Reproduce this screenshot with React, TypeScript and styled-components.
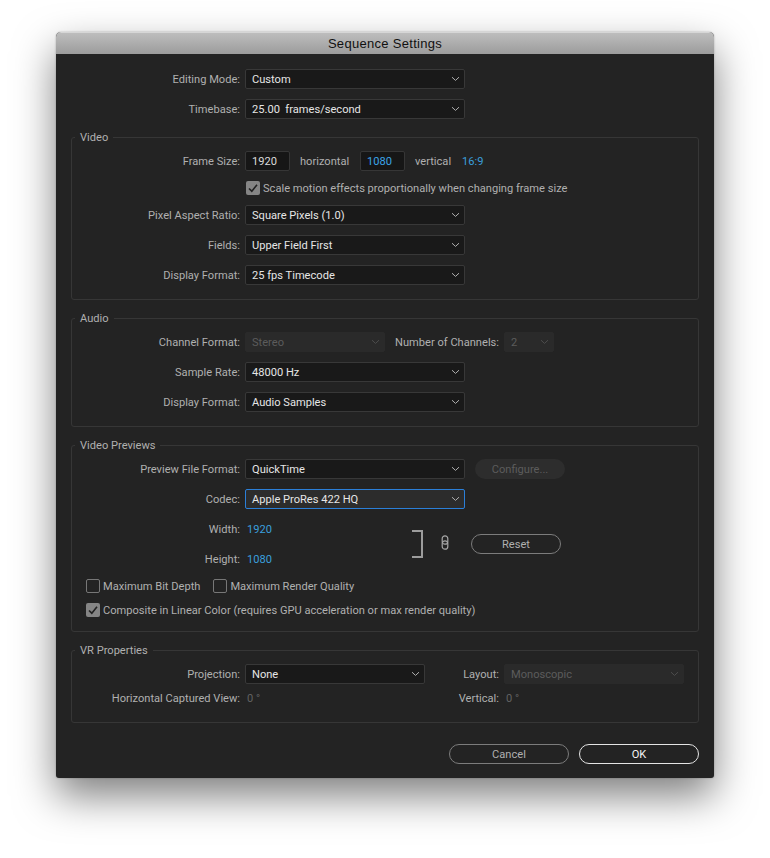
import React from "react";
import styled, { createGlobalStyle, css } from "styled-components";

const Global = createGlobalStyle`
  html, body { margin: 0; padding: 0; background: #fff; }
  body { font-family: Roboto, Lato, sans-serif; font-size: 11.1px; line-height: 19px; }
  * { box-sizing: border-box; }
`;

const textLine = css`
  line-height: 19px;
  padding-top: 1px;
`;

const Page = styled.div`
  width: 770px;
  height: 858px;
  padding: 32px 0 0 56px;
  overflow: hidden;
`;

const Window = styled.div`
  width: 658px;
  height: 746px;
  background: #232323;
  border-radius: 5px 5px 3px 3px;
  box-shadow: 0 18px 40px rgba(0, 0, 0, 0.5), 0 0 2px rgba(0, 0, 0, 0.3);
  overflow: hidden;
`;

const TitleBar = styled.div`
  height: 22px;
  display: flex;
  align-items: center;
  justify-content: center;
  background: linear-gradient(#bdbdbd, #9c9c9c);
  border-top: 1px solid #d6d6d6;
  color: #111;
  font-family: "Liberation Sans", Arial, sans-serif;
  font-size: 13px;
  letter-spacing: 0.3px;
`;

const Content = styled.div`
  padding: 15px;
  display: flex;
  flex-direction: column;
  align-items: stretch;
`;

const Stack = styled.div<{ $gap?: number }>`
  display: flex;
  flex-direction: column;
  gap: ${(p) => p.$gap ?? 10}px;
`;

const Group = styled.fieldset`
  margin: 11px 0 0;
  min-width: 0;
  padding: 7px 0 14px;
  border: 1px solid #363636;
  border-radius: 3px;
`;

const Legend = styled.legend`
  margin-left: 3px;
  padding: 0 5px;
  height: 14px;
  line-height: 16px;
  color: #b0b0b0;
`;

const Row = styled.div`
  display: flex;
  align-items: center;
  gap: 5px;
  height: 20px;
`;

const Label = styled.div<{ $w: number }>`
  ${textLine}
  width: ${(p) => p.$w}px;
  flex: none;
  text-align: right;
  color: #b0b0b0;
  white-space: nowrap;
`;

const SelectBox = styled.div<{ $w: number; $off?: boolean; $focus?: boolean }>`
  width: ${(p) => p.$w}px;
  height: 20px;
  flex: none;
  display: flex;
  align-items: center;
  justify-content: space-between;
  padding: 0 4px 0 6px;
  border-radius: 2px;
  border: 1px solid ${(p) => (p.$focus ? "#2b7fd8" : p.$off ? "#2a2a2a" : "#383838")};
  background: ${(p) => (p.$off ? "#2a2a2a" : p.$focus ? "#2c2c2c" : "#191919")};
  color: ${(p) => (p.$off ? "#5c5c5c" : "#e6e6e6")};
  white-space: pre;
`;

const Value = styled.span`
  ${textLine}
`;

const Chevron = styled.svg<{ $off?: boolean }>`
  width: 9px;
  height: 6px;
  flex: none;
  fill: none;
  stroke: ${(p) => (p.$off ? "#4c4c4c" : "#b0b0b0")};
  stroke-width: 1;
`;

const Select = ({ w, value, off, focus }: { w: number; value: string; off?: boolean; focus?: boolean }) => (
  <SelectBox $w={w} $off={off} $focus={focus}>
    <Value>{value}</Value>
    <Chevron $off={off} viewBox="0 0 9 6">
      <polyline points="1,1.2 4.5,4.4 8,1.2" />
    </Chevron>
  </SelectBox>
);

const NumberField = styled.div<{ $blue?: boolean }>`
  width: 45px;
  height: 20px;
  flex: none;
  display: flex;
  align-items: center;
  padding-left: 6px;
  border: 1px solid #363636;
  border-radius: 2px;
  background: #161616;
  color: ${(p) => (p.$blue ? "#3ba4e6" : "#dcdcdc")};
`;

const Unit = styled.div<{ $w: number }>`
  ${textLine}
  width: ${(p) => p.$w}px;
  margin-left: 5px;
  flex: none;
  color: #b0b0b0;
`;

const BlueValue = styled.div`
  ${textLine}
  color: #3a9fdc;
`;

const ValueCell = styled.div<{ $w?: number; $dim?: boolean }>`
  ${textLine}
  width: ${(p) => p.$w ?? 180}px;
  flex: none;
  padding-left: 2px;
  color: ${(p) => (p.$dim ? "#626262" : "#3a9fdc")};
`;

const CheckRow = styled.div<{ $pad: number }>`
  display: flex;
  align-items: center;
  height: 14px;
  padding-left: ${(p) => p.$pad}px;
  gap: 13px;
`;

const CheckLabel = styled.div`
  display: flex;
  align-items: center;
  gap: 3px;
  color: #b0b0b0;
  white-space: nowrap;
`;

const Box = styled.div<{ $on?: boolean }>`
  width: 14px;
  height: 14px;
  flex: none;
  display: flex;
  align-items: center;
  justify-content: center;
  border-radius: 2px;
  border: ${(p) => (p.$on ? "none" : "1.5px solid #777")};
  background: ${(p) => (p.$on ? "#858585" : "transparent")};
`;

const Tick = styled.svg`
  width: 10px;
  height: 10px;
  fill: none;
  stroke: #222;
  stroke-width: 1.6;
`;

const Check = ({ on, children }: { on?: boolean; children: React.ReactNode }) => (
  <CheckLabel>
    <Box $on={on}>
      {on && (
        <Tick viewBox="0 0 10 10">
          <polyline points="1,5.5 3.8,8.2 9,1.8" />
        </Tick>
      )}
    </Box>
    <Value>{children}</Value>
  </CheckLabel>
);

const Dimensions = styled.div`
  display: flex;
  align-items: center;
`;

const Bracket = styled.div`
  width: 11px;
  height: 28px;
  margin-left: -173px;
  flex: none;
  border: 2px solid #9c9c9c;
  border-left: none;
`;

const LinkIcon = styled.svg`
  width: 8px;
  height: 15px;
  margin: -4px 0 0 18px;
  flex: none;
  fill: none;
  stroke: #a8a8a8;
  stroke-width: 1.2;
`;

const Pill = styled.div<{ $w: number; $tone: "plain" | "off" | "primary"; $ml?: number }>`
  width: ${(p) => p.$w}px;
  height: 20px;
  margin-left: ${(p) => p.$ml ?? 0}px;
  flex: none;
  display: flex;
  align-items: center;
  justify-content: center;
  border-radius: 10px;
  border: ${(p) =>
    p.$tone === "off" ? "none" : p.$tone === "primary" ? "1.5px solid #e4e4e4" : "1.5px solid #7c7c7c"};
  background: ${(p) => (p.$tone === "off" ? "#2d2d2d" : "transparent")};
  color: ${(p) => (p.$tone === "off" ? "#5c5c5c" : p.$tone === "primary" ? "#f4f4f4" : "#b0b0b0")};
`;

const Footer = styled.div`
  margin-top: 21px;
  display: flex;
  justify-content: flex-end;
  gap: 10px;
`;

export default function App() {
  return (
    <>
      <Global />
      <Page>
        <Window>
          <TitleBar>Sequence Settings</TitleBar>
          <Content>
            <Stack>
              <Row>
                <Label $w={169}>Editing Mode:</Label>
                <Select w={220} value="Custom" />
              </Row>
              <Row>
                <Label $w={169}>Timebase:</Label>
                <Select w={220} value="25.00  frames/second" />
              </Row>
            </Stack>

            <Group>
              <Legend>Video</Legend>
              <Stack>
                <Row>
                  <Label $w={168}>Frame Size:</Label>
                  <NumberField><Value>1920</Value></NumberField>
                  <Unit $w={55}>horizontal</Unit>
                  <NumberField $blue><Value>1080</Value></NumberField>
                  <Unit $w={42}>vertical</Unit>
                  <BlueValue>16:9</BlueValue>
                </Row>
                <CheckRow $pad={174}>
                  <Check on>Scale motion effects proportionally when changing frame size</Check>
                </CheckRow>
                <Row>
                  <Label $w={168}>Pixel Aspect Ratio:</Label>
                  <Select w={220} value="Square Pixels (1.0)" />
                </Row>
                <Row>
                  <Label $w={168}>Fields:</Label>
                  <Select w={220} value="Upper Field First" />
                </Row>
                <Row>
                  <Label $w={168}>Display Format:</Label>
                  <Select w={220} value="25 fps Timecode" />
                </Row>
              </Stack>
            </Group>

            <Group>
              <Legend>Audio</Legend>
              <Stack>
                <Row>
                  <Label $w={168}>Channel Format:</Label>
                  <Select w={140} value="Stereo" off />
                  <Label $w={109}>Number of Channels:</Label>
                  <Select w={50} value="2" off />
                </Row>
                <Row>
                  <Label $w={168}>Sample Rate:</Label>
                  <Select w={220} value="48000 Hz" />
                </Row>
                <Row>
                  <Label $w={168}>Display Format:</Label>
                  <Select w={220} value="Audio Samples" />
                </Row>
              </Stack>
            </Group>

            <Group>
              <Legend>Video Previews</Legend>
              <Stack>
                <Row>
                  <Label $w={168}>Preview File Format:</Label>
                  <Select w={220} value="QuickTime" />
                  <Pill $w={90} $tone="off" $ml={5}><Value>Configure...</Value></Pill>
                </Row>
                <Row>
                  <Label $w={168}>Codec:</Label>
                  <Select w={220} value="Apple ProRes 422 HQ" focus />
                </Row>
                <Dimensions>
                  <Stack>
                    <Row>
                      <Label $w={168}>Width:</Label>
                      <ValueCell $w={340}>1920</ValueCell>
                    </Row>
                    <Row>
                      <Label $w={168}>Height:</Label>
                      <ValueCell $w={340}>1080</ValueCell>
                    </Row>
                  </Stack>
                  <Bracket />
                  <LinkIcon viewBox="0 0 8 15">
                    <rect x="1.2" y="0.8" width="5.6" height="8.4" rx="2.8" />
                    <rect x="1.2" y="5.8" width="5.6" height="8.4" rx="2.8" />
                  </LinkIcon>
                  <Pill $w={90} $tone="plain" $ml={22}><Value>Reset</Value></Pill>
                </Dimensions>
                <Stack>
                  <CheckRow $pad={14}>
                    <Check>Maximum Bit Depth</Check>
                    <Check>Maximum Render Quality</Check>
                  </CheckRow>
                  <CheckRow $pad={14}>
                    <Check on>Composite in Linear Color (requires GPU acceleration or max render quality)</Check>
                  </CheckRow>
                </Stack>
              </Stack>
            </Group>

            <Group>
              <Legend>VR Properties</Legend>
              <Stack $gap={4}>
                <Row>
                  <Label $w={168}>Projection:</Label>
                  <Select w={180} value="None" />
                  <Label $w={69}>Layout:</Label>
                  <Select w={180} value="Monoscopic" off />
                </Row>
                <Row>
                  <Label $w={168}>Horizontal Captured View:</Label>
                  <ValueCell $dim>0 °</ValueCell>
                  <Label $w={69}>Vertical:</Label>
                  <ValueCell $dim>0 °</ValueCell>
                </Row>
              </Stack>
            </Group>

            <Footer>
              <Pill $w={120} $tone="plain"><Value>Cancel</Value></Pill>
              <Pill $w={120} $tone="primary"><Value>OK</Value></Pill>
            </Footer>
          </Content>
        </Window>
      </Page>
    </>
  );
}
